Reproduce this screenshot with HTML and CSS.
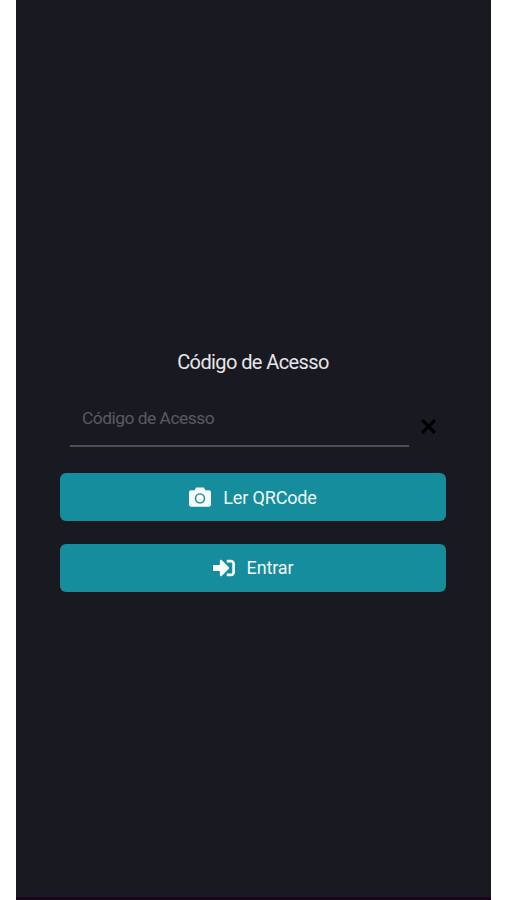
FILE: index.html
```html
<!DOCTYPE html>
<html lang="pt-BR">
<head>
    <meta charset="UTF-8">
    <meta name="viewport" content="width=device-width, initial-scale=1.0">
    <title>Código de Acesso</title>
    <link rel="stylesheet" href="styles.css">
</head>
<body>
    <main class="screen">
        <form class="access-form">
            <h1>Código de Acesso</h1>
            <div class="field">
                <input type="text" class="code-input" placeholder="Código de Acesso" aria-label="Código de Acesso">
                <button type="reset" class="clear" aria-label="Limpar">
                    <svg viewBox="0 0 16 16"><path d="M2 2l12 12M14 2L2 14"/></svg>
                </button>
            </div>
            <button type="button" class="btn">
                <svg class="icon" viewBox="0 0 512 512"><path d="M512 144v288c0 26.500-21.500 48-48 48H48c-26.500 0-48-21.500-48-48V144c0-26.500 21.500-48 48-48h88l12.300-32.900c7-18.700 24.900-31.100 44.900-31.100h125.500c20 0 37.900 12.400 44.900 31.100L376 96h88c26.500 0 48 21.500 48 48zM376 288c0-66.200-53.800-120-120-120s-120 53.800-120 120 53.800 120 120 120 120-53.800 120-120zm-32 0c0 48.500-39.500 88-88 88s-88-39.500-88-88 39.500-88 88-88 88 39.500 88 88z"/></svg>
                <span>Ler QRCode</span>
            </button>
            <button type="button" class="btn">
                <svg class="icon" viewBox="0 0 512 512"><path d="M416 448h-84c-6.600 0-12-5.400-12-12v-40c0-6.600 5.400-12 12-12h84c17.700 0 32-14.300 32-32V160c0-17.700-14.300-32-32-32h-84c-6.600 0-12-5.400-12-12V76c0-6.600 5.400-12 12-12h84c53 0 96 43 96 96v192c0 53-43 96-96 96zm-47-209L201 71c-15-15-41-4.500-41 17v96H24c-13.300 0-24 10.700-24 24v96c0 13.300 10.700 24 24 24h136v96c0 21.500 26 32 41 17l168-168c9.300-9.400 9.300-24.600 0-34z"/></svg>
                <span>Entrar</span>
            </button>
        </form>
    </main>
</body>
</html>
```
FILE: styles.css
```css
* {
    box-sizing: border-box;
}

body {
    margin: 0;
    background: #fff;
    font-family: Roboto, "Liberation Sans", sans-serif;
}

/* Tela */
.screen {
    width: 475px;
    height: 900px;
    margin: 0 15px 0 16px;
    padding: 350px 45px 0 44px;
    background: #191a21;
    border-bottom: 3px solid #150919;
}

.access-form {
    display: flex;
    flex-direction: column;
}

h1 {
    margin: 0;
    color: #e6e6e8;
    font-size: 20px;
    font-weight: 400;
    letter-spacing: -0.6px;
    line-height: 24px;
    text-align: center;
}

/* Campo do código */
.field {
    display: flex;
    align-items: flex-start;
    margin: 18px 0 26px;
    padding-left: 10px;
}

.code-input {
    width: 339px;
    height: 55px;
    padding: 0 12px 1px;
    background: transparent;
    border: 0;
    border-bottom: 2px solid #505157;
    outline: none;
    color: #e6e6e8;
    font-family: inherit;
    font-size: 17.4px;
    letter-spacing: -0.5px;
}

.code-input::placeholder {
    color: #5a5b5f;
    opacity: 1;
}

.clear {
    display: flex;
    margin: 26px 0 0 11px;
    padding: 0;
    background: none;
    border: 0;
}

.clear svg {
    width: 17px;
    height: 17px;
    fill: none;
    stroke: #000;
    stroke-width: 3;
}

/* Botões */
.btn {
    display: flex;
    align-items: center;
    justify-content: center;
    gap: 12px;
    height: 48px;
    margin-bottom: 22.5px;
    padding: 0;
    background: #168d9d;
    border: 0;
    border-radius: 6px;
    color: #f0f8f9;
    font-family: inherit;
    font-size: 18px;
    letter-spacing: -0.15px;
}

.icon {
    width: 22px;
    height: 22px;
    fill: #f8fcfc;
}
```
